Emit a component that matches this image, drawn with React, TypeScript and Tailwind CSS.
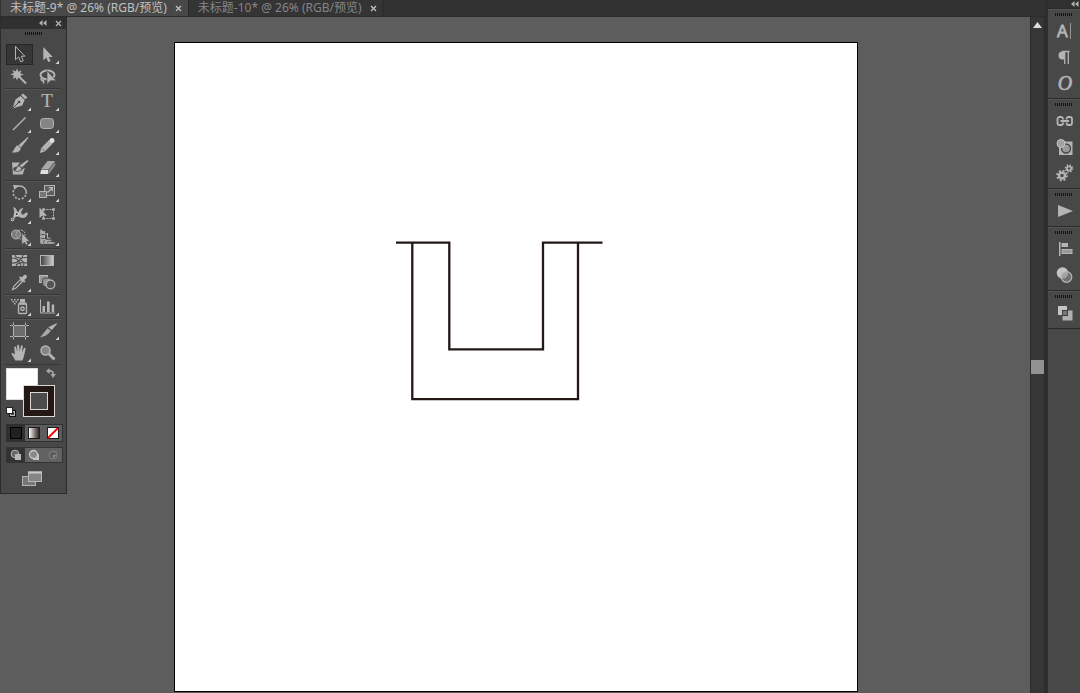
import React from "react";

const tabs = [
  { name: "未标题-9* @ 26% (RGB/预览)", active: true },
  { name: "未标题-10* @ 26% (RGB/预览)", active: false },
];

type Item = { label: string; icon: React.ReactNode; more?: boolean };

const line = { fill: "none", stroke: "currentColor" };

// every tool icon is drawn in a 28 x 22 box
const toolGroups: Item[][] = [
  [
    {
      label: "Selection",
      icon: <path {...line} d="M10.5 2.5v13.2l3.2-2.7 2 4.8 2.6-1-2-4.6h3.6z" />,
    },
    {
      label: "Direct selection",
      more: true,
      icon: <path d="M10.3 3v13.3l3-2.6 1.9 4.3 2.4-1-1.9-4.1h4.1z" />,
    },
    {
      label: "Magic wand",
      icon: (
        <>
          <path d="M12 2.5l1.3 3.2 3.2-1.5-1.3 3.1 3.6 1.1-3.6 1.3 1.3 3-3.2-1.2-1.3 3.1-1.3-3.2-3.1 1.3 1.3-3.1-3.4-1.2 3.4-1.3-1.5-3 3.2 1.4z" />
          <path {...line} strokeWidth="2" d="M14 10.5l7 7" />
        </>
      ),
    },
    {
      label: "Lasso",
      icon: (
        <>
          <ellipse {...line} strokeWidth="2" cx="14.5" cy="9" rx="7" ry="4.5" />
          <path {...line} strokeWidth="1.6" d="M9 12c-2 1.5 0 3 1.6 2.4M10.5 13.5v4" />
          <path d="M14 4.500v14l3.400-3.700h5.800z" stroke="#484848" strokeWidth=".7" />
        </>
      ),
    },
  ],
  [
    {
      label: "Pen",
      more: true,
      icon: (
        <>
          <path d="M18 2.5l4.500 4-2.200 1.800-4.200-4z" />
          <path d="M15.500 5l4.200 4-2.500 5.500L7.500 17.500l3-9z" />
          <path fill="none" stroke="#484848" d="M8 17l5.500-5.500" />
          <circle cx="14" cy="11" r="1.3" fill="#484848" />
        </>
      ),
    },
    {
      label: "Type",
      more: true,
      icon: (
        <text x="14" y="16" textAnchor="middle" fontSize="19" stroke="currentColor" strokeWidth=".2" className="font-['Liberation_Serif',serif]">
          T
        </text>
      ),
    },
    {
      label: "Line segment",
      more: true,
      icon: <path {...line} strokeWidth="1.4" d="M8 17L20.5 4.5" />,
    },
    {
      label: "Rounded rectangle",
      more: true,
      icon: <rect x="7.5" y="5.5" width="13" height="10" rx="3" fill="#858585" stroke="currentColor" />,
    },
    {
      label: "Paintbrush",
      icon: (
        <>
          <path d="M22.800 2l.7.7-7.500 9.800-2.500-2.300z" />
          <path d="M12.800 10.300l3 2.700c-.5 4.200-4.500 5-9.500 4.300 3.500-1.200 2.800-5.800 6.500-7z" />
        </>
      ),
    },
    {
      label: "Pencil",
      more: true,
      icon: (
        <>
          <path d="M16 5l3.800 3.500-8 8L7 18l1.200-5z" />
          <circle cx="19" cy="5.5" r="2.5" fill="#dedede" />
          <path fill="none" stroke="#484848" strokeWidth=".7" d="M8.700 13.500l3 2.700" />
        </>
      ),
    },
    {
      label: "Blob brush",
      icon: (
        <>
          <path d="M7 5.500h8l-3 4-3 1-1 2.500 3 1.500 5-.5 3-3h.8l-2 6.500H8z" />
          <path d="M22.500 3l1 1-6.500 6.500-2.500-2z" />
          <path d="M14 8.700l2.800 2.600c-1 3.300-4 3.500-7.300 2.700 2-1 1.800-4.500 4.500-5.300z" stroke="#484848" strokeWidth=".6" />
        </>
      ),
    },
    {
      label: "Eraser",
      more: true,
      icon: (
        <>
          <path fill="#a8a8a8" d="M14.500 4H22l-6.500 8.500H8z" />
          <path fill="#dedede" d="M8 12.900h7.300v4H7.200z" />
          <path fill="#8c8c8c" d="M22.200 4.700v3.800l-6.200 8.200v-3.900z" />
        </>
      ),
    },
  ],
  [
    {
      label: "Rotate",
      more: true,
      icon: (
        <>
          <path {...line} strokeWidth="1.4" d="M11 5.200A6.500 6.500 0 0 1 21 12" />
          <path {...line} strokeWidth="1.6" strokeDasharray="2 1.5" d="M20.700 13a6.500 6.500 0 0 1-12-5" />
          <path d="M8 3l5.500.2L9.500 8z" />
        </>
      ),
    },
    {
      label: "Scale",
      more: true,
      icon: (
        <>
          <rect x="11.5" y="3.5" width="10" height="10" fill="#5e5e5e" stroke="currentColor" />
          <rect x="6.5" y="9.5" width="7" height="6" fill="#777" stroke="currentColor" />
          <path {...line} strokeWidth="1.3" d="M14.500 10.500L19 6M15.800 5.700h3.500v3.500" />
        </>
      ),
    },
    {
      label: "Warp",
      more: true,
      icon: (
        <>
          <path d="M8 3.500c3-.5 3.500 2.500 5 5.500 1-3 2.500-5.500 5.500-4.500-1 1-2.500 2.500-2.300 4.500 1 2.500 2.800 1.500 3.800.2 1-1 3-.7 2.700.8-.7 3-4.200 5.200-7.200 3.500-2.500-1.500-4.500-1.500-6 .5l-1.500-1.500C10 9.500 9.500 6 8 3.500z" />
          <path {...line} d="M8 15.500l4.500-6" />
          <circle cx="11.7" cy="10" r="1.7" fill="#484848" stroke="#e2e2e2" />
          <circle cx="7.5" cy="15.5" r="1.3" fill="#484848" stroke="#e2e2e2" />
        </>
      ),
    },
    {
      label: "Free transform",
      icon: (
        <>
          <rect {...line} x="10.5" y="5.5" width="10" height="9" strokeDasharray="2 1" />
          <path d="M6.500 3.500v10.500l2.700-2.300h4.800zM9.200 4.200h2.600v2.600H9.200zM19.200 4.200h2.600v2.600h-2.600zM9.200 13.200h2.600v2.600H9.200zM19.200 13.200h2.600v2.600h-2.600z" />
        </>
      ),
    },
    {
      label: "Shape builder",
      more: true,
      icon: (
        <>
          <circle cx="11" cy="8.5" r="4.5" fill="#7c7c7c" stroke="currentColor" />
          <circle cx="15.5" cy="8.5" r="4.5" fill="none" stroke="currentColor" strokeDasharray="2 1" />
          <path d="M16.800 7v11.500l2.700-2.300 1.600 2.800 1.800-.9-1.500-2.800h3.200z" stroke="#484848" strokeWidth=".5" />
        </>
      ),
    },
    {
      label: "Perspective grid",
      more: true,
      icon: (
        <>
          <path d="M7.500 3.500l4 2.200v7l10 5H7.500z" fill="#a4a4a4" />
          <path {...line} d="M8 3.500v13.300h14M11.500 5v9.300h7M14.500 7v5.200h3M8 8.500l6-.5" />
          <path fill="none" stroke="#484848" strokeWidth=".8" d="M8 8.500h4M8 12.500h4.500M11.500 14l-1 3M15.500 15l-1 2" />
        </>
      ),
    },
  ],
  [
    {
      label: "Mesh",
      icon: (
        <>
          <rect x="7" y="5" width="15" height="11" />
          <path fill="none" stroke="#484848" strokeWidth="1.1" d="M10 5c0 3 5 3.500 12 2.500M7 8c4 0 8 2 9 8M7 13c4 .5 6-1 8-3s3-3 3-5M11 16c1-3 5-4 11-3M18 16c2-2 1-4-2-6" />
        </>
      ),
    },
    {
      label: "Gradient",
      icon: (
        <>
          <defs>
            <linearGradient id="tool-gradient">
              <stop stopColor="#3c3c3c" />
              <stop offset="1" stopColor="#d2d2d2" />
            </linearGradient>
          </defs>
          <rect x="7.5" y="5.5" width="13" height="10" fill="url(#tool-gradient)" stroke="#b5b5b5" />
        </>
      ),
    },
    {
      label: "Eyedropper",
      more: true,
      icon: (
        <>
          <path {...line} strokeWidth="1.2" d="M15.500 7.500l2 2-6.500 6.500-3.500 1.500 1.500-3.500z" />
          <path d="M14 5.500l1.300-1.200 1.500 1.200 2-2.300c1.800-1.500 4.200.8 2.700 2.700l-2.300 2 1.300 1.500-1.300 1.300z" />
        </>
      ),
    },
    {
      label: "Blend",
      icon: (
        <>
          <rect x="6.5" y="3.5" width="8" height="7" fill="#999" stroke="#b8b8b8" />
          <rect x="9.5" y="6" width="9" height="8.5" rx="2.5" fill="#929292" stroke="#484848" />
          <circle cx="17.5" cy="12.5" r="4.3" fill="#555" stroke="#b8b8b8" strokeWidth="1.3" />
        </>
      ),
    },
  ],
  [
    {
      label: "Symbol sprayer",
      more: true,
      icon: (
        <>
          <rect {...line} x="13.5" y="8" width="8" height="9.500" rx="1" strokeWidth="1.4" />
          <path d="M15 3h5v3.200h-5zM13.500 6.500h8v2h-8z" />
          <circle cx="17.5" cy="12.8" r="1.7" {...line} strokeWidth="1.5" />
          <path d="M6 3h1.500v1.500H6zM9 3h1.500v1.500H9zM12 3h1.500v1.500H12zM7.500 5H9v1.500H7.500zM10.500 5H12v1.500h-1.500zM9 7h1.500v1.500H9z" />
        </>
      ),
    },
    {
      label: "Column graph",
      more: true,
      icon: (
        <>
          <path {...line} d="M7.500 3.500V17H22" />
          <path d="M9.500 10H12v6H9.500zM14 5.500h2.700V16H14zM18.700 8.500h2.500V16h-2.500z" />
        </>
      ),
    },
  ],
  [
    {
      label: "Artboard",
      icon: (
        <>
          <rect x="9" y="6" width="11" height="10" fill="#6c6c6c" />
          <path {...line} d="M8.500 2.500V5M8.500 6v10M8.500 17v2.500M20.500 2.500V5M20.500 6v10M20.500 17v2.500M5 5.500h3M9 5.500h11M21 5.500h3M5 16.500h3M9 16.500h11M21 16.500h3" />
        </>
      ),
    },
    {
      label: "Slice",
      more: true,
      icon: (
        <>
          <path d="M23.500 3.200l.5.700-5.200 6-3.600-2.700z" />
          <path d="M14.500 8.200l3.300 2.600c-2.500 4-6 5.600-10.800 6.700z" fill="#a8a8a8" />
        </>
      ),
    },
    {
      label: "Hand",
      more: true,
      icon: (
        <path d="M10.300 18.500c-.7-2.500-3.600-5-3.800-7 .8-1 2.200-.2 3.500 1.300L9.200 5.500c0-1.300 1.600-1.300 1.900-.2l1.100 4.400-.1-6c0-1.400 1.900-1.400 2 0l.5 5.900 1.200-5.400c.3-1.300 2-1 1.900.3l-.6 5.700 1.700-3.800c.6-1.100 2.100-.4 1.700.8-.8 3-1.400 8.500-3.200 11.300z" />
      ),
    },
    {
      label: "Zoom",
      icon: (
        <>
          <circle cx="12.5" cy="8.5" r="4.500" fill="#858585" stroke="currentColor" strokeWidth="1.5" />
          <path {...line} strokeWidth="2.800" d="M16 12l5.500 5.500" />
        </>
      ),
    },
  ],
];

// panel icons on the right, 20 x 20
const dockGroups: Item[][] = [
  [
    {
      label: "Character",
      icon: (
        <>
          <text x="3" y="15.5" fontSize="16" className="font-['Liberation_Sans',sans-serif]" stroke="currentColor" strokeWidth=".8">
            A
          </text>
          <path {...line} stroke="#999" d="M16.500 2v16" />
        </>
      ),
    },
    {
      label: "Paragraph",
      icon: (
        <>
          <path d="M10 4.500H8.500a4 4 0 0 0 0 8H10z" />
          <path {...line} strokeWidth="1.3" d="M8 4.500h7.500M10.700 4v13M14.300 4v13" />
        </>
      ),
    },
    {
      label: "OpenType",
      icon: (
        <text x="11" y="17" textAnchor="middle" fontSize="20" fontStyle="italic" stroke="currentColor" strokeWidth=".6" className="font-['Liberation_Serif',serif]">
          O
        </text>
      ),
    },
  ],
  [
    {
      label: "Links",
      icon: (
        <path {...line} strokeWidth="1.8" d="M9 8.500V8a2 2 0 0 0-2-2H5.500a2 2 0 0 0-2 2v4a2 2 0 0 0 2 2H7a2 2 0 0 0 2-2v-.5M12.500 8.500V8a2 2 0 0 1 2-2H16a2 2 0 0 1 2 2v4a2 2 0 0 1-2 2h-1.500a2 2 0 0 1-2-2v-.5M6.500 10H15" />
      ),
    },
    {
      label: "Pattern options",
      icon: (
        <>
          <rect x="5" y="4.500" width="13.500" height="13.500" fill="#b4b4b4" />
          <circle cx="12" cy="11.5" r="4.500" fill="#999" stroke="#484848" strokeWidth="1.400" />
          <circle cx="7" cy="6.5" r="4" fill="#a0a0a0" stroke="#c8c8c8" />
        </>
      ),
    },
    {
      label: "Actions settings",
      icon: (
        <>
          <circle {...line} cx="8" cy="12.5" r="3" strokeWidth="2.5" />
          <circle {...line} cx="8" cy="12.5" r="5" strokeWidth="1.6" strokeDasharray="2 1.930" />
          <circle {...line} cx="15" cy="5.5" r="2.1" strokeWidth="1.800" />
          <circle {...line} cx="15" cy="5.5" r="3.6" strokeWidth="1.400" strokeDasharray="1.400 1.430" />
        </>
      ),
    },
  ],
  [{ label: "Actions", icon: <path d="M4 4l15 6-15 6z" /> }],
  [
    {
      label: "Align",
      icon: (
        <>
          <path d="M5 3h1.500v14H5zM7.500 4H14v4H7.500z" />
          <rect x="8" y="10.500" width="10" height="4" fill="#999" stroke="currentColor" />
        </>
      ),
    },
    {
      label: "Transparency",
      icon: (
        <>
          <circle cx="8.500" cy="8" r="5.800" fill="#c4c4c4" />
          <circle cx="12.500" cy="12" r="5.300" fill="#8c8c8c" fillOpacity=".6" stroke="#b4b4b4" strokeWidth="1.200" />
        </>
      ),
    },
  ],
  [
    {
      label: "Pathfinder",
      icon: (
        <>
          <rect x="4" y="3" width="9" height="9" fill="#c4c4c4" />
          <rect x="8.500" y="7.500" width="10" height="10" fill="#b0b0b0" />
          <rect x="8.500" y="7.500" width="5" height="5" fill="#777" stroke="#3c3c3c" />
        </>
      ),
    },
  ],
];

const CloseMark = () => (
  <svg viewBox="0 0 7 7" className="size-[7px]" fill="none" stroke="currentColor" strokeWidth="1.3">
    <path d="M1 1l5 5M6 1L1 6" />
  </svg>
);

const CollapseMark = () => (
  <svg viewBox="0 0 8 6" className="h-[6px] w-[8px]" fill="currentColor">
    <path d="M3.500 0v6L0 3zM7.500 0v6L4 3z" />
  </svg>
);

const Grip = () => (
  <svg viewBox="0 0 18 3" className="mx-auto block h-[3px] w-[18px]">
    <path stroke="#141414" strokeWidth="3" strokeDasharray="1 1" d="M0 1.500h18" />
  </svg>
);

const Tabs = () => (
  <header className="flex h-[17px] shrink-0 border-b border-[#2c2c2c] bg-[#323232] pl-px font-['Noto_Sans','Noto_Sans_CJK_SC',sans-serif] text-xs leading-4">
    {tabs.map((tab) => (
      <div
        key={tab.name}
        className={
          tab.active
            ? "flex items-center gap-2 bg-[#484848] pr-[6px] pl-[9px] text-[#c0c0c0]"
            : "flex items-center gap-2 border-x border-[#292929] bg-[#343434] pr-[6px] pl-[9px] text-[#858585]"
        }
      >
        <button type="button" className="whitespace-nowrap">
          {tab.name}
        </button>
        <button type="button" aria-label={"Close " + tab.name} className="text-[#c0c0c0]">
          <CloseMark />
        </button>
      </div>
    ))}
  </header>
);

const Swatches = () => (
  <div className="relative h-[60px] border-t border-[#363636]">
    <button type="button" aria-label="Fill" className="absolute top-[3px] left-px size-8 border border-[#dcdcdc] bg-white" />
    <button type="button" aria-label="Stroke" className="absolute top-5 left-[18px] flex size-8 items-center justify-center border border-[#d8d8d8] bg-[#231815]">
      <span className="size-[18px] border border-[#d8d8d8] bg-[#4c4c4c]" />
    </button>
    <button type="button" aria-label="Swap fill and stroke" className="absolute top-[3px] left-[41px] text-[#a8a8a8]">
      <svg viewBox="0 0 10 10" className="size-[10px]" fill="currentColor">
        <path d="M0 3l3.500-3v2C6.500 2 8 3.500 8 6h2L7 10 4.500 6h2c0-1.500-1-2.300-3-2.300V6z" />
      </svg>
    </button>
    <button type="button" aria-label="Default fill and stroke" className="absolute top-[42px] left-px">
      <svg viewBox="0 0 10 10" className="size-[10px]">
        <rect x="3.500" y="3.500" width="6" height="6" fill="#484848" stroke="#111" />
        <rect x="4.500" y="4.500" width="4" height="4" fill="none" stroke="#bbb" />
        <rect x=".5" y=".5" width="6" height="6" fill="#fff" stroke="#222" />
      </svg>
    </button>
  </div>
);

const PaintModes = () => (
  <div className="grid h-[18px] grid-cols-3 border border-[#303030] bg-[#5c5c5c]">
    <button type="button" aria-label="Color" className="flex items-center justify-center bg-[#303030]">
      <span className="size-3 border border-black bg-[#231f1d]" />
    </button>
    <button type="button" aria-label="Gradient fill" className="flex items-center justify-center">
      <span className="size-3 border border-[#1c1c1c] bg-linear-to-r from-white to-[#332824]" />
    </button>
    <button type="button" aria-label="None" className="flex items-center justify-center">
      <svg viewBox="0 0 12 12" className="size-3">
        <rect x=".5" y=".5" width="11" height="11" fill="#fff" stroke="#1c1c1c" />
        <path d="M1 11L11 1" stroke="#f00" strokeWidth="1.800" />
      </svg>
    </button>
  </div>
);

const DrawModes = () => (
  <div className="mt-[5px] grid h-4 grid-cols-3 border border-[#343434] bg-[#626262]">
    <button type="button" aria-label="Draw normal" className="flex items-center justify-center bg-[#333]">
      <svg viewBox="0 0 12 12" className="size-3">
        <circle cx="5" cy="5" r="3.800" fill="#666" stroke="#b8b8b8" />
        <rect x="5" y="5" width="6" height="6" fill="#b8b8b8" />
      </svg>
    </button>
    <button type="button" aria-label="Draw behind" className="flex items-center justify-center">
      <svg viewBox="0 0 12 12" className="size-3">
        <rect x="5" y="5" width="6" height="6" fill="#c4c4c4" />
        <circle cx="5.500" cy="5.500" r="4" fill="#888" stroke="#c4c4c4" strokeWidth="1.300" />
      </svg>
    </button>
    <button type="button" aria-label="Draw inside" className="flex items-center justify-center">
      <svg viewBox="0 0 12 12" className="size-3">
        <circle cx="6" cy="6" r="4" fill="#5c5c5c" stroke="#808080" />
        <path d="M6 6h3.500L6 9.500z" fill="#8c8c8c" />
      </svg>
    </button>
  </div>
);

const Toolbox = () => (
  <aside className="w-[67px] shrink-0 self-start border-x border-b border-[#2c2c2c] bg-[#484848] pb-[6px] text-[#b4b4b4]">
    <div className="flex h-3 items-center justify-end gap-2 bg-[#303030] pr-1">
      <button type="button" aria-label="Collapse tools">
        <CollapseMark />
      </button>
      <button type="button" aria-label="Close tools">
        <CloseMark />
      </button>
    </div>
    <div className="h-[15px] pt-[3px]">
      <Grip />
    </div>
    <div className="pr-[5px] pl-[4px]">
      {toolGroups.map((group, i) => (
        <div
          key={group[0].label}
          className={
            i === 0
              ? "grid grid-cols-2"
              : i === 1
                ? "grid grid-cols-2 border-t border-[#363636] pt-[2px] pb-px shadow-[inset_0_1px_0_#555]"
                : "grid grid-cols-2 border-t border-[#363636] pt-px shadow-[inset_0_1px_0_#555]"
          }
        >
          {group.map((tool) => (
            <button key={tool.label} type="button" aria-label={tool.label} className="h-[22px]">
              <svg viewBox="0 0 28 22" className="block h-[22px] w-7" fill="currentColor">
                {tool.label === "Selection" && (
                  <rect x="1.5" y=".5" width="26" height="20" fill="#363636" stroke="#262626" />
                )}
                {tool.icon}
                {tool.more && <path fill="#d4d4d4" d="M26 16.500V20h-3.500z" />}
              </svg>
            </button>
          ))}
        </div>
      ))}
      <Swatches />
    </div>
    <div className="pr-[3px] pl-[5px]">
      <PaintModes />
      <DrawModes />
      <button type="button" aria-label="Screen mode" className="mt-2 ml-4 block">
        <svg viewBox="0 0 20 16" className="h-4 w-5">
          <rect x=".5" y="5.500" width="13" height="9" fill="#777" stroke="#b4b4b4" />
          <rect x="6.500" y="1" width="13" height="9.500" fill="#858585" stroke="#b8b8b8" />
          <path d="M6 1.500h14" stroke="#c8c8c8" strokeWidth="2" />
        </svg>
      </button>
    </div>
  </aside>
);

const Artboard = () => (
  <div className="flex-1 border border-black bg-white">
    <svg viewBox="175 43 682 648" preserveAspectRatio="xMinYMin meet" className="block size-full" fill="none" stroke="#231815" strokeWidth="2.300">
      <path d="M396 242.700H449.300V349.300H543V242.700H602.500" />
      <path d="M412.300 242.700V399.200H578V242.700" />
    </svg>
  </div>
);

const ScrollBar = () => (
  <div className="flex w-[15px] shrink-0 flex-col items-center border-x border-[#2a2a2a] bg-[#363636] pt-[5px]">
    <button type="button" aria-label="Scroll up">
      <svg viewBox="0 0 9 6" className="block h-[6px] w-[9px]" fill="#dcdcdc">
        <path d="M4.500 0L9 6H0z" />
      </svg>
    </button>
    <div className="mt-[332px] h-[14px] w-full bg-[#929292]" />
  </div>
);

const Dock = () => (
  <aside className="w-8 shrink-0 bg-[#484848] text-[#b4b4b4]">
    <div className="flex h-2 items-center justify-end bg-[#303030] pr-px">
      <button type="button" aria-label="Expand panels">
        <CollapseMark />
      </button>
    </div>
    {dockGroups.map((group) => (
      <div key={group[0].label} className="flex flex-col items-center border-t border-[#2a2a2a] pb-[2px] shadow-[inset_0_1px_0_#555]">
        <div className="h-[9px] pt-1">
          <Grip />
        </div>
        {group.map((panel) => (
          <button key={panel.label} type="button" aria-label={panel.label} className="flex h-[26px] items-center">
            <svg viewBox="0 0 20 20" className="size-5" fill="currentColor">
              {panel.icon}
            </svg>
          </button>
        ))}
      </div>
    ))}
    <div className="border-t border-[#2a2a2a]" />
  </aside>
);

export default function App() {
  return (
    <div className="flex h-screen w-full overflow-hidden bg-[#5d5d5d]">
      <div className="flex min-w-0 flex-1 flex-col">
        <Tabs />
        <div className="flex min-h-0 flex-1">
          <Toolbox />
          <main className="flex min-w-0 flex-1 pt-[25px] pr-[172px] pb-px pl-[107px]">
            <Artboard />
          </main>
          <ScrollBar />
        </div>
      </div>
      <div className="w-[3px] shrink-0 bg-[#2e2e2e]" />
      <Dock />
    </div>
  );
}
